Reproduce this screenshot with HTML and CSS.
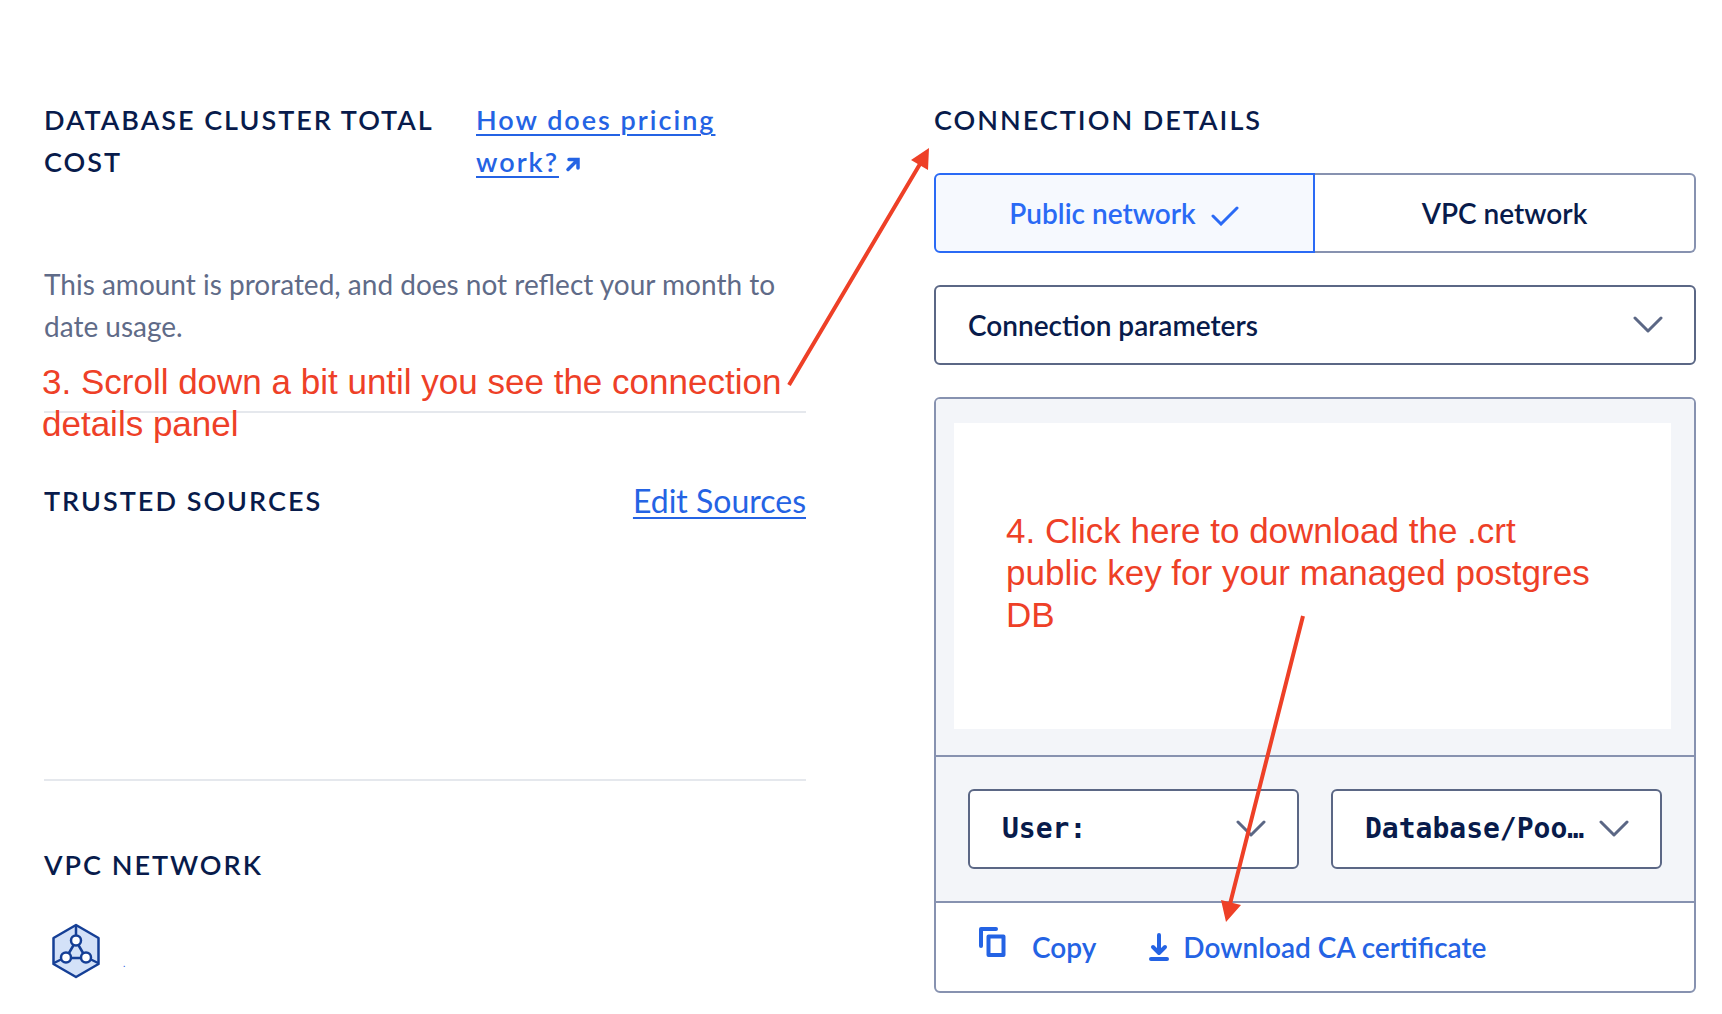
FILE: index.html
```html
<!DOCTYPE html>
<html lang="en">
<head>
<meta charset="utf-8">
<meta name="viewport" content="width=device-width, initial-scale=1">
<title>Database cluster overview</title>
<link rel="stylesheet" href="styles.css">
</head>
<body>
<main class="page">
  <div class="column">
    <section class="block block-cost">
      <div class="cost-head">
        <h2 class="heading">Database cluster total cost</h2>
        <p class="pricing"><a class="pricing-link" href="#pricing">How does pricing work?</a><svg class="icon-external" width="16" height="16" viewBox="0 0 16 16" aria-hidden="true"><path d="M4 3.500H13V12M12.500 4L3 13.500" fill="none" stroke="currentColor" stroke-width="3.500" stroke-linecap="round"/></svg></p>
      </div>
      <p class="note">This amount is prorated, and does not reflect your month to date usage.</p>
    </section>
    <section class="block block-sources">
      <h2 class="heading">Trusted sources</h2>
      <a class="edit-link" href="#sources">Edit Sources</a>
    </section>
    <section class="block-vpc">
      <h2 class="heading">VPC network</h2>
      <div class="vpc-row">
        <svg class="icon-vpc" width="50" height="56" viewBox="0 0 50 56" aria-hidden="true">
          <path d="M25 2L47.500 15V41L25 54L2.500 41V15Z" fill="#d3e1f8"/>
          <g fill="none" stroke="#153f96" stroke-width="2.500" stroke-linejoin="round">
            <path d="M25 2L47.500 15V41L25 54L2.500 41V15Z"/>
            <path d="M25 2V14M3 40L11 36M47 40L39 36M25 18L15 35H35Z"/>
            <g fill="#fff"><circle cx="25" cy="17.500" r="5"/><circle cx="15" cy="34.500" r="5"/><circle cx="35" cy="34.500" r="5"/></g>
          </g>
        </svg>
        <a class="vpc-link" href="#vpc">.</a>
      </div>
    </section>
  </div>

  <section class="column">
    <h2 class="heading">Connection details</h2>
    <div class="segments">
      <button class="segment segment-active" type="button" aria-pressed="true">Public network
        <svg class="icon-check" width="30" height="22" viewBox="0 0 30 22" aria-hidden="true"><path d="M3 12L11 20L27 4" fill="none" stroke="currentColor" stroke-width="3" stroke-linecap="round"/></svg>
      </button>
      <button class="segment" type="button" aria-pressed="false">VPC network</button>
    </div>
    <div class="picker">
      <select class="select" aria-label="Connection format"><option>Connection parameters</option><option>Connection string</option></select>
      <svg class="chevron" width="30" height="18" viewBox="0 0 30 18" aria-hidden="true"><path d="M2 2L15 15L28 2"/></svg>
    </div>
    <div class="panel">
      <div class="panel-body">
        <div class="panel-blank"><p class="annotation annotation-download">4. Click here to download the .crt public key for your managed postgres DB</p></div>
      </div>
      <div class="panel-selects">
        <div class="picker">
          <select class="select select-mono" aria-label="User"><option>User:</option></select>
          <svg class="chevron" width="30" height="18" viewBox="0 0 30 18" aria-hidden="true"><path d="M2 2L15 15L28 2"/></svg>
        </div>
        <div class="picker">
          <select class="select select-mono" aria-label="Database or pool"><option>Database/Pool: defaultdb</option></select>
          <svg class="chevron" width="30" height="18" viewBox="0 0 30 18" aria-hidden="true"><path d="M2 2L15 15L28 2"/></svg>
        </div>
      </div>
      <div class="panel-foot">
        <button class="action action-copy" type="button">
          <svg width="28" height="32" viewBox="0 0 28 32" aria-hidden="true"><g fill="none" stroke="currentColor" stroke-width="4" stroke-linejoin="round" stroke-linecap="round"><path d="M3 20V3H18"/><path d="M10.500 10.500H25.500V29H10.500Z"/></g></svg>
          Copy
        </button>
        <a class="action" href="#ca-certificate">
          <svg width="20" height="28" viewBox="0 0 20 28" aria-hidden="true"><path d="M10 2V20M4 14L10 20L16 14M2 26H18" fill="none" stroke="currentColor" stroke-width="4" stroke-linecap="round" stroke-linejoin="round"/></svg>
          Download CA certificate
        </a>
      </div>
    </div>
  </section>

  <p class="annotation annotation-scroll">3. Scroll down a bit until you see the connection details panel</p>
  <svg class="arrows" width="1722" height="1014" viewBox="0 0 1722 1014" aria-hidden="true">
    <path d="M789 385L920 164M1303 616L1230 904" stroke="#ee4027" stroke-width="4"/>
    <path d="M929 148L928 170L911 160ZM1226 922L1221 900L1241 905Z" fill="#ee4027"/>
  </svg>
</main>
</body>
</html>
```
FILE: styles.css
```css
* { box-sizing: border-box; }

body {
  margin: 0;
  background: #fff;
  color: #081b4b;
  font: 28px/42px Lato, "Open Sans", sans-serif;
}

h2, p { margin: 0; }

.page {
  position: relative;
  display: grid;
  grid-template-columns: 1fr 1fr;
  gap: 128px;
  padding: 99px 26px 21px 44px;
}

.column { min-width: 0; }

.heading {
  font-size: 27px;
  font-weight: 600;
  line-height: 42px;
  letter-spacing: 2px;
  text-transform: uppercase;
}

.block { border-bottom: 2px solid #e5e8ed; }

.block-cost {
  display: flex;
  flex-direction: column;
  gap: 80px;
  padding-bottom: 64px;
}

.cost-head {
  display: grid;
  grid-template-columns: 6fr 5fr;
  gap: 36px;
}

.pricing {
  color: #2463e4;
  font-size: 27px;
  font-weight: 600;
  letter-spacing: 2px;
  max-width: 280px;
}

.pricing-link { color: inherit; text-decoration-thickness: 2px; text-underline-offset: 4px; }
.icon-external { margin-left: 6px; }
.note { color: #5f6b88; }

.block-sources {
  display: flex;
  justify-content: space-between;
  align-items: flex-start;
  padding: 67px 0 257px;
}

.edit-link {
  color: #2463e4;
  font-size: 32px;
  text-decoration-thickness: 2px;
  text-underline-offset: 4px;
}

.block-vpc {
  display: flex;
  flex-direction: column;
  gap: 37px;
  padding-top: 63px;
}

.vpc-row { display: flex; align-items: flex-end; gap: 22px; padding-left: 7px; }
.icon-vpc { display: block; }
.vpc-link { color: #2463e4; font-size: 10px; line-height: 32px; text-decoration: none; }

.segments { display: grid; grid-template-columns: 1fr 1fr; margin: 32px 0; }

.segment {
  display: flex;
  align-items: center;
  justify-content: center;
  gap: 14px;
  height: 80px;
  padding: 0;
  border: 2px solid #8792b0;
  border-left: 0;
  border-radius: 0 6px 6px 0;
  background: #fff;
  color: #081b4b;
  font: 600 28px/42px Lato, "Open Sans", sans-serif;
}

.segment-active {
  border: 2px solid #2a6af5;
  border-radius: 6px 0 0 6px;
  background: #f6f9fe;
  color: #2a6af5;
}

.icon-check { margin-top: 4px; }

.picker { display: grid; align-items: center; min-width: 0; }

.select {
  grid-area: 1 / 1;
  width: 100%;
  min-width: 0;
  height: 80px;
  padding: 0 68px 0 32px;
  border: 2px solid #5b6785;
  border-radius: 6px;
  background: #fff;
  color: #081b4b;
  font: 600 28px/42px Lato, "Open Sans", sans-serif;
  text-overflow: ellipsis;
  appearance: none;
}

.select-mono { font: 700 28px/42px "DejaVu Sans Mono", monospace; }

.chevron {
  grid-area: 1 / 1;
  justify-self: end;
  margin-right: 33px;
  fill: none;
  stroke: #5b6785;
  stroke-width: 3;
  stroke-linecap: round;
  stroke-linejoin: round;
  pointer-events: none;
}

.panel {
  margin-top: 32px;
  overflow: hidden;
  border: 2px solid #8792b0;
  border-radius: 6px;
}

.panel-body { padding: 24px 23px 26px 18px; background: #f3f5f9; }
.panel-blank { min-height: 306px; padding: 87px 52px; background: #fff; }

.panel-selects {
  display: grid;
  grid-template-columns: 1fr 1fr;
  gap: 32px;
  padding: 32px;
  border: solid #8792b0;
  border-width: 2px 0;
  background: #f3f5f9;
}

.panel-foot { display: flex; align-items: center; gap: 53px; height: 88px; padding: 0 42px; }

.action {
  display: flex;
  align-items: center;
  gap: 14px;
  padding: 0;
  border: 0;
  background: none;
  color: #2463e4;
  font: 600 28px/42px Lato, "Open Sans", sans-serif;
  text-decoration: none;
}

.action-copy { align-items: flex-start; gap: 26px; }

.annotation {
  color: #ee4027;
  font: 35px/42px "Liberation Sans", Arial, sans-serif;
}

.annotation-download { max-width: 590px; }

/* Callouts drawn over the page */
.annotation-scroll { position: absolute; top: 361px; left: 42px; width: 760px; }
.arrows { position: absolute; top: 0; left: 0; pointer-events: none; }
```
